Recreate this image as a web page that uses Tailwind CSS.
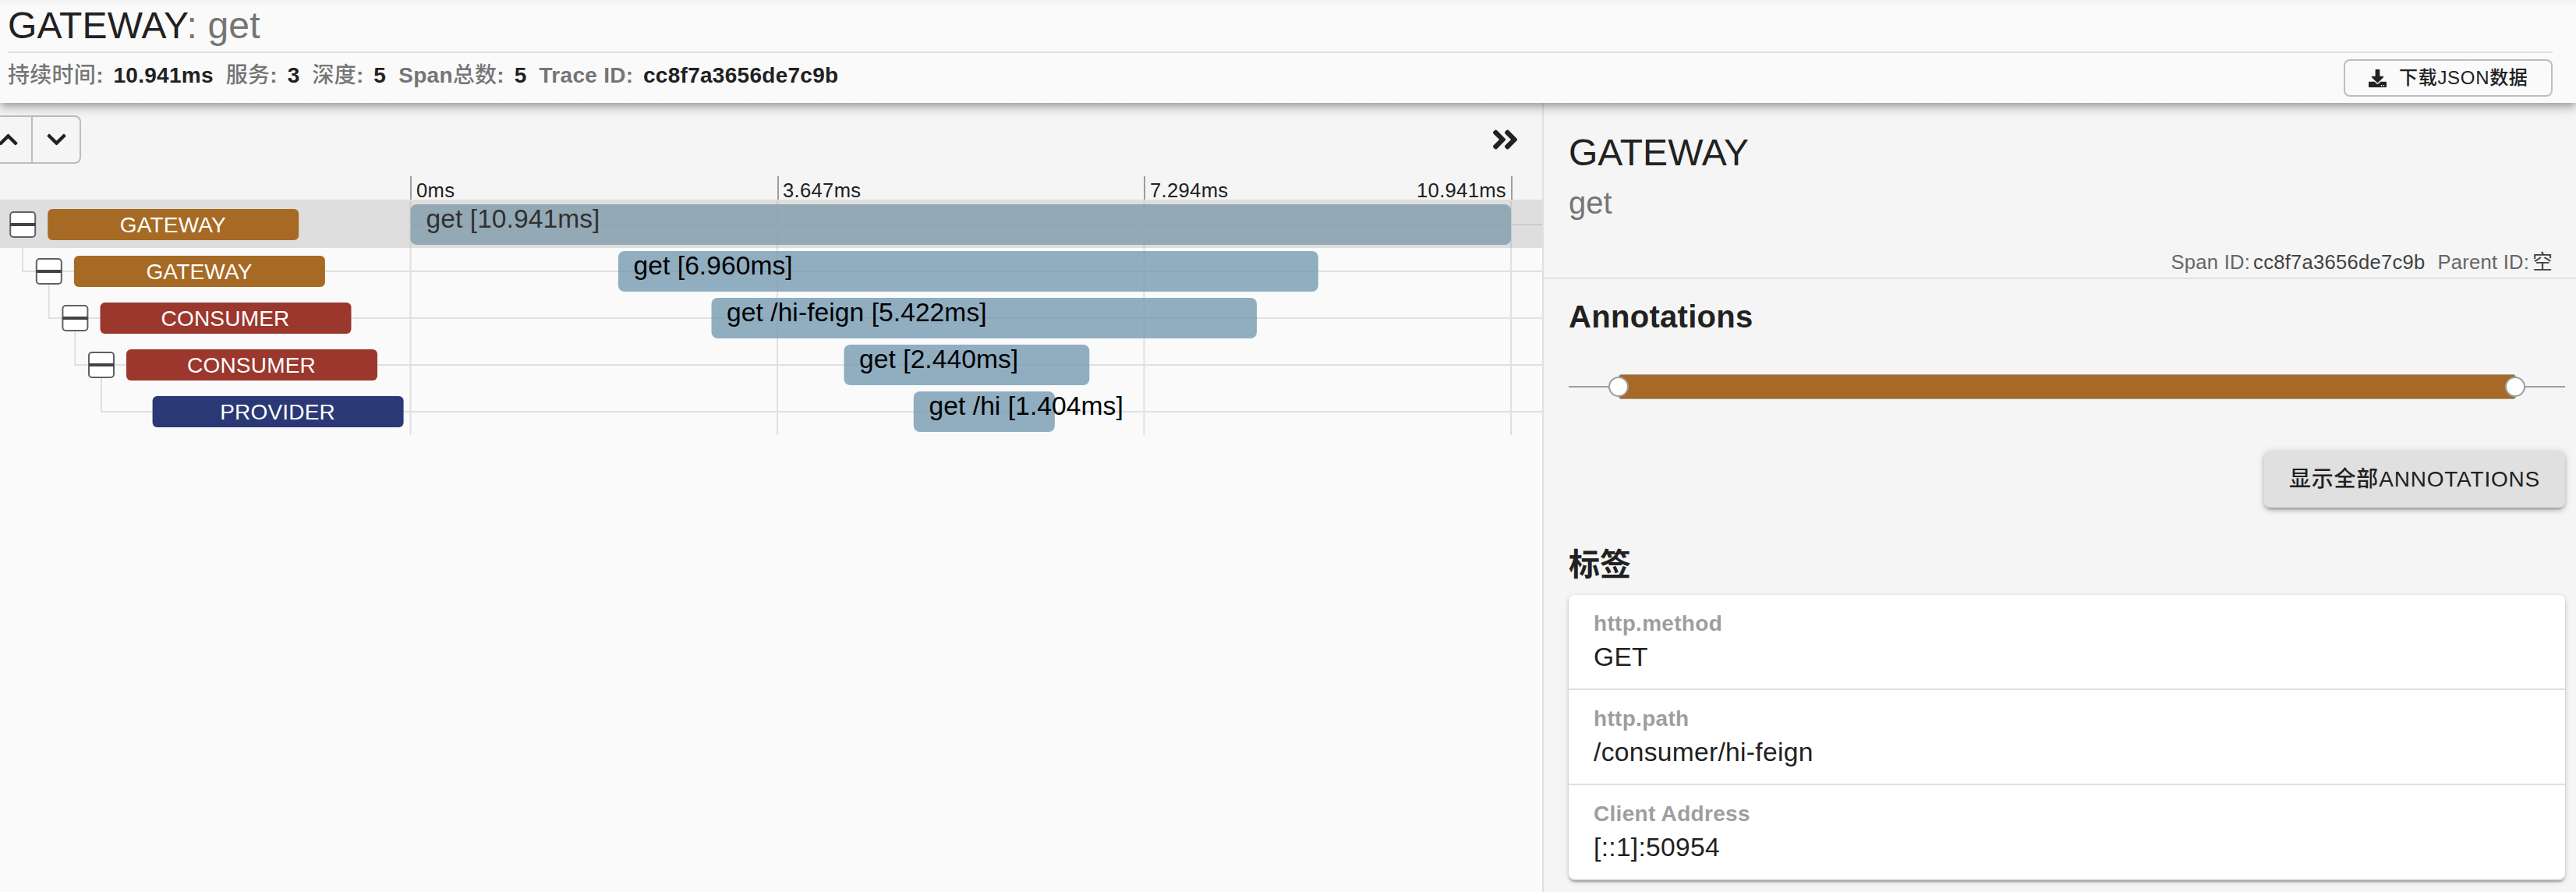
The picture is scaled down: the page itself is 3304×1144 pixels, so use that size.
<!DOCTYPE html>
<html lang="zh-CN">
<head>
<meta charset="utf-8">
<title>GATEWAY: get</title>
<script src="https://cdn.jsdelivr.net/npm/@tailwindcss/browser@4"></script>
</head>
<body class="flex h-screen flex-col overflow-hidden bg-[#fafafa] font-['Liberation_Sans','Noto_Sans_CJK_SC',sans-serif] text-[#212121]">
  <header class="relative z-10 h-[132px] shrink-0 bg-linear-to-b from-[#f3f3f3] to-[#fafafa] to-[10px] pl-[10px] pr-[30px] shadow-[0_4px_8px_-2px_rgba(0,0,0,0.2),0_8px_10px_0_rgba(0,0,0,0.14),0_2px_20px_0_rgba(0,0,0,0.12)]">
    <h1 class="h-[68px] border-b-2 border-[#e0e0e0] text-[48px] leading-[66px] tracking-[0.15px]">GATEWAY<span class="text-[#757575]">: get</span></h1>
    <div class="flex justify-between">
      <dl class="flex h-[57px] gap-4 text-[28px] font-bold leading-[57px] tracking-[0.28px]">
        <div class="flex gap-[12.7px]"><dt class="text-[#757575]"><span class="font-medium">持续时间</span>:</dt><dd>10.941ms</dd></div>
        <div class="flex gap-[12.7px]"><dt class="text-[#757575]"><span class="font-medium">服务</span>:</dt><dd>3</dd></div>
        <div class="flex gap-[12.7px]"><dt class="text-[#757575]"><span class="font-medium">深度</span>:</dt><dd>5</dd></div>
        <div class="flex gap-[12.7px]"><dt class="text-[#757575]">Span<span class="font-medium">总数</span>:</dt><dd>5</dd></div>
        <div class="flex gap-[12.7px]"><dt class="text-[#757575]">Trace ID:</dt><dd>cc8f7a3656de7c9b</dd></div>
      </dl>
      <button class="mt-2 flex h-12 w-[268px] items-center rounded-lg border-2 border-[#bdbdbd] pl-[30px] text-[24px] font-medium leading-[44px] tracking-[0.69px]">
        <svg class="mr-4 size-[23px]" viewBox="0 0 512 512" fill="currentColor"><path d="M216 0h80c13.300 0 24 10.700 24 24v168h87.700c17.800 0 26.700 21.500 14.100 34.100L269.700 378.300c-7.500 7.500-19.800 7.500-27.300 0L90.100 226.100c-12.600-12.600-3.700-34.100 14.100-34.100H192V24c0-13.300 10.700-24 24-24zm296 376v112c0 13.300-10.700 24-24 24H24c-13.300 0-24-10.700-24-24V376c0-13.300 10.700-24 24-24h146.700l49 49c20.100 20.100 52.500 20.100 72.600 0l49-49H488c13.300 0 24 10.700 24 24zm-124 88c0-11-9-20-20-20s-20 9-20 20 9 20 20 20 20-9 20-20zm64 0c0-11-9-20-20-20s-20 9-20 20 9 20 20 20 20-9 20-20z"/></svg>
        <span>下载JSON数据</span>
      </button>
    </div>
  </header>

  <main class="flex min-h-0 flex-1">
    <section class="w-[1980px] shrink-0 overflow-hidden border-r-2 border-[#e0e0e0]">
      <div class="flex h-[94px] justify-between bg-[#f5f5f5] pr-[30px] pt-4">
        <div class="-ml-[22px] flex h-[62px] w-[126px] rounded-lg border-2 border-[#bdbdbd]">
          <button class="flex w-[62px] items-center justify-center border-r-2 border-[#bdbdbd]"><svg class="h-7 w-[25px]" viewBox="0 0 448 512" fill="currentColor"><path d="M240.971 130.524l194.343 194.343c9.373 9.373 9.373 24.569 0 33.941l-22.667 22.667c-9.357 9.357-24.522 9.375-33.901.04L224 227.495 69.255 381.516c-9.379 9.335-24.544 9.317-33.901-.04l-22.667-22.667c-9.373-9.373-9.373-24.569 0-33.941L207.030 130.525c9.372-9.373 24.568-9.373 33.941-.001z"/></svg></button>
          <button class="flex flex-1 items-center justify-center"><svg class="h-7 w-[25px]" viewBox="0 0 448 512" fill="currentColor"><path d="M207.029 381.476L12.686 187.132c-9.373-9.373-9.373-24.569 0-33.941l22.667-22.667c9.357-9.357 24.522-9.375 33.901-.04L224 284.505l154.745-154.021c9.379-9.335 24.544-9.317 33.901.04l22.667 22.667c9.373 9.373 9.373 24.569 0 33.941L240.971 381.476c-9.373 9.372-24.569 9.372-33.942 0z"/></svg></button>
        </div>
        <button class="flex h-[62px] items-center"><svg class="h-10 w-[35px]" viewBox="0 0 448 512" fill="currentColor"><path d="M224.300 273l-136 136c-9.400 9.400-24.600 9.400-33.900 0l-22.600-22.600c-9.400-9.400-9.400-24.600 0-33.900l96.400-96.400-96.400-96.400c-9.400-9.400-9.400-24.600 0-33.900L54.300 103c9.400-9.400 24.600-9.400 33.900 0l136 136c9.500 9.400 9.500 24.600.1 34zm192-34l-136-136c-9.400-9.400-24.600-9.400-33.900 0l-22.600 22.600c-9.400 9.400-9.400 24.600 0 33.900l96.400 96.400-96.400 96.400c-9.400 9.400-9.400 24.600 0 33.900l22.600 22.600c9.400 9.400 24.600 9.400 33.900 0l136-136c9.400-9.200 9.400-24.400 0-33.800z"/></svg></button>
      </div>
      <div class="flex h-[30px] bg-[#f5f5f5] pl-[526px] text-[25.6px] leading-[36px] tracking-[0.32px]">
        <div class="w-[471px] border-l-2 border-[#9e9e9e] pl-[6px]">0ms</div>
        <div class="w-[470px] border-l-2 border-[#9e9e9e] pl-[5px]">3.647ms</div>
        <div class="flex w-[473px] justify-between border-x-2 border-[#9e9e9e] pl-[6px] pr-[6px]"><span>7.294ms</span><span>10.941ms</span></div>
      </div>
      <!-- Span tree and timeline -->
      <svg class="block" width="1978" height="304" viewBox="0 256 1978 304">
        <g stroke="#e0e0e0" stroke-width="2">
          <path d="M526.500 258V558M997 258V558M1467.400 258V558M1938 258V558"/>
          <path d="M526 288H1978M29 348H1978M63 408H1978M96 468H1978M130 528H1978"/>
        </g>
        <g fill="#759bb2" fill-opacity="0.8">
          <rect x="526.500" y="262" width="1411.500" height="52" rx="8"/>
          <rect x="792.900" y="322" width="897.900" height="52" rx="8"/>
          <rect x="912.500" y="382" width="699.500" height="52" rx="8"/>
          <rect x="1082.500" y="442" width="314.800" height="52" rx="8"/>
          <rect x="1171.800" y="502" width="181.100" height="52" rx="8"/>
        </g>
        <g fill="#000" font-size="33.6" letter-spacing="0.06">
          <text x="546.500" y="292">get [10.941ms]</text>
          <text x="812.500" y="352">get [6.960ms]</text>
          <text x="932" y="412">get /hi-feign [5.422ms]</text>
          <text x="1102" y="472">get [2.440ms]</text>
          <text x="1191.500" y="532">get /hi [1.404ms]</text>
        </g>
        <rect x="0" y="256" width="1978" height="62" fill="#9e9e9e" fill-opacity="0.3"/>
        <path d="M29 288H526M29 288V349M62.700 348V409M96.300 408V469M130 468V529" fill="none" stroke="#e0e0e0" stroke-width="2"/>
        <g fill="#fff" stroke="#616161" stroke-width="2">
          <rect x="13.200" y="272" width="32" height="32" rx="4"/>
          <rect x="46.800" y="332" width="32" height="32" rx="4"/>
          <rect x="80.400" y="392" width="32" height="32" rx="4"/>
          <rect x="114" y="452" width="32" height="32" rx="4"/>
        </g>
        <path d="M13 288H45.500M46.800 348H79M80.400 408H112.700M114 468H146" stroke="#424242" stroke-width="4"/>
        <rect x="61.200" y="268" width="322" height="40" rx="6" fill="#a66a24"/>
        <rect x="94.900" y="328" width="322" height="40" rx="6" fill="#a66a24"/>
        <rect x="128.500" y="388" width="322" height="40" rx="6" fill="#9b372d"/>
        <rect x="162" y="448" width="322" height="40" rx="6" fill="#9b372d"/>
        <rect x="195.600" y="508" width="322" height="40" rx="6" fill="#2b3876"/>
        <g fill="#fff" font-size="28" text-anchor="middle" letter-spacing="0.2">
          <text x="221.900" y="298">GATEWAY</text>
          <text x="255.500" y="358">GATEWAY</text>
          <text x="289" y="418">CONSUMER</text>
          <text x="322.500" y="478">CONSUMER</text>
          <text x="356.100" y="538">PROVIDER</text>
        </g>
      </svg>
    </section>

    <aside class="flex-1 bg-[#f5f5f5]">
      <div class="h-[226px] border-b-2 border-[#e0e0e0] pl-8 pr-[30px] pt-[31px]">
        <h2 class="h-16 text-[48px] leading-[65px]">GATEWAY</h2>
        <p class="mt-[5px] h-14 text-[40px] leading-[56px] text-[#757575]">get</p>
        <div class="mt-7 flex h-10 justify-end gap-4 text-[25.6px] leading-[40px] tracking-[0.25px]">
          <div class="flex gap-1"><span class="text-[#666666]">Span ID:</span><span class="text-[#424242]">cc8f7a3656de7c9b</span></div>
          <div class="flex gap-1"><span class="text-[#666666]">Parent ID:</span><span class="text-[#424242]">空</span></div>
        </div>
      </div>
      <div class="flex flex-col pl-8 pr-[14px] pt-5">
        <h3 class="h-14 text-[40px] font-bold leading-[56px] tracking-[0.3px]">Annotations</h3>
        <svg class="mt-[30px] block" width="1278" height="64" viewBox="0 0 1278 64" stroke="#9e9e9e">
          <path d="M0 32H1278" stroke-width="2"/>
          <rect x="64.500" y="16.500" width="1150" height="31" rx="3" fill="#a66a24" stroke-width="1"/>
          <circle cx="64" cy="32" r="12" fill="#fff" stroke-width="2"/>
          <circle cx="1214" cy="32" r="12" fill="#fff" stroke-width="2"/>
        </svg>
        <button class="mt-[50px] h-[73px] w-[386px] self-end rounded-lg bg-[#e0e0e0] text-[28px] font-medium leading-[73px] tracking-[0.8px] shadow-[0_2px_10px_0_rgba(0,0,0,0.2),0_4px_4px_0_rgba(0,0,0,0.14),0_6px_2px_-4px_rgba(0,0,0,0.12)]">显示全部ANNOTATIONS</button>
        <h3 class="mt-[45px] h-14 text-[40px] font-bold leading-[56px]">标签</h3>
        <ul class="mt-[11px] rounded-lg bg-white shadow-[0_2px_6px_0_rgba(0,0,0,0.2),0_2px_2px_0_rgba(0,0,0,0.14),0_4px_2px_-2px_rgba(0,0,0,0.12)]">
          <li class="h-[122px] border-b-2 border-[#e0e0e0] px-8 pt-[17px]"><div class="h-10 text-[28px] font-bold leading-[40px] tracking-[0.3px] text-[#9e9e9e]">http.method</div><div class="mt-px h-11 text-[33.6px] leading-[44px] tracking-[0.3px]">GET</div></li>
          <li class="h-[122px] border-b-2 border-[#e0e0e0] px-8 pt-[17px]"><div class="h-10 text-[28px] font-bold leading-[40px] tracking-[0.3px] text-[#9e9e9e]">http.path</div><div class="mt-px h-11 text-[33.6px] leading-[44px] tracking-[0.3px]">/consumer/hi-feign</div></li>
          <li class="h-[122px] rounded-b-lg border-b-2 border-[#e0e0e0] px-8 pt-[17px]"><div class="h-10 text-[28px] font-bold leading-[40px] tracking-[0.3px] text-[#9e9e9e]">Client Address</div><div class="mt-px h-11 text-[33.6px] leading-[44px] tracking-[0.3px]">[::1]:50954</div></li>
        </ul>
      </div>
    </aside>
  </main>
</body>
</html>
